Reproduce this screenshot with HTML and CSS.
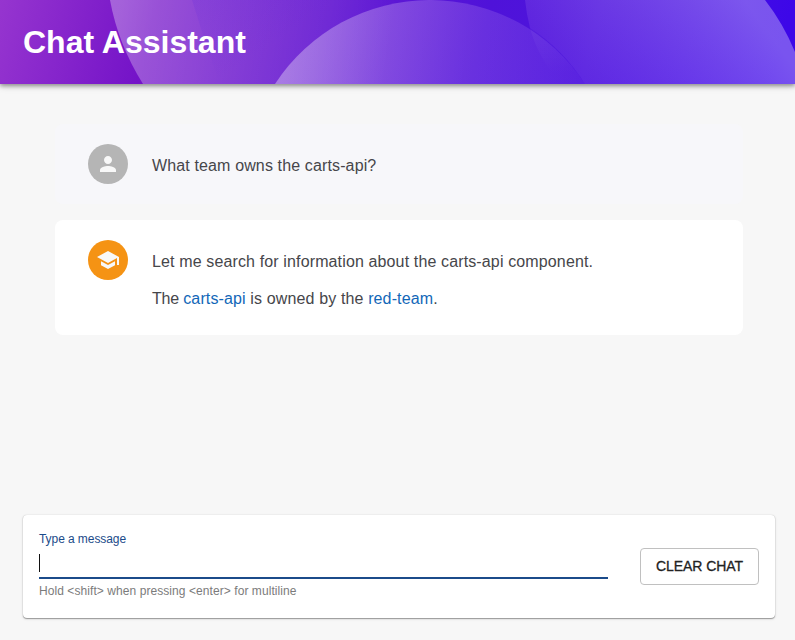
FILE: index.html
```html
<!DOCTYPE html>
<html lang="en">
<head>
<meta charset="utf-8">
<title>Chat Assistant</title>
<link rel="stylesheet" href="styles.css">
</head>
<body>
<header class="header">
  <svg class="header-art" viewBox="0 0 795 84" preserveAspectRatio="none" aria-hidden="true">
    <defs>
      <linearGradient id="base" gradientUnits="userSpaceOnUse" x1="0" y1="0" x2="740" y2="200">
        <stop offset="0" stop-color="#9635cf"/>
        <stop offset=".2" stop-color="#7413c8"/>
        <stop offset=".42" stop-color="#651ad2"/>
        <stop offset=".62" stop-color="#4f12d9"/>
        <stop offset=".76" stop-color="#4d15de"/>
        <stop offset="1" stop-color="#3d07e8"/>
      </linearGradient>
      <linearGradient id="left" gradientUnits="userSpaceOnUse" x1="115" y1="30" x2="385" y2="75">
        <stop offset="0" stop-color="#fff" stop-opacity=".31"/>
        <stop offset=".4" stop-color="#fff" stop-opacity=".18"/>
        <stop offset="1" stop-color="#fff" stop-opacity="0"/>
      </linearGradient>
      <linearGradient id="middle" gradientUnits="userSpaceOnUse" x1="285" y1="65" x2="580" y2="100">
        <stop offset="0" stop-color="#fff" stop-opacity=".35"/>
        <stop offset=".6" stop-color="#f0d0ff" stop-opacity=".17"/>
        <stop offset="1" stop-color="#ddb0ff" stop-opacity=".09"/>
      </linearGradient>
      <linearGradient id="right" gradientUnits="userSpaceOnUse" x1="550" y1="84" x2="715" y2="-39">
        <stop offset="0" stop-color="#ddb0ff" stop-opacity=".09"/>
        <stop offset="1" stop-color="#fff" stop-opacity=".31"/>
      </linearGradient>
      <linearGradient id="sheen" gradientUnits="userSpaceOnUse" x1="193" y1="0" x2="238" y2="68">
        <stop offset="0" stop-color="#5420e0" stop-opacity=".15"/>
        <stop offset="1" stop-color="#5420e0" stop-opacity="0"/>
      </linearGradient>
      <linearGradient id="overlap" gradientUnits="userSpaceOnUse" x1="0" y1="26" x2="0" y2="74">
        <stop offset="0" stop-color="#fff" stop-opacity=".05"/>
        <stop offset="1" stop-color="#fff" stop-opacity="0"/>
      </linearGradient>
    </defs>
    <rect width="795" height="84" fill="url(#base)"/>
    <path d="M110 0Q118 44 143 84H430V0Z" fill="url(#left)"/>
    <path d="M192 0Q199 22 207 48L220 84H330V0Z" fill="url(#sheen)"/>
    <path d="M525 0Q526.500 14 530 28A185 185 0 0 1 585 84H795V52Q783 23 765 0Z" fill="url(#right)"/>
    <path d="M275 84A185 185 0 0 1 585 84Z" fill="url(#middle)"/>
    <path d="M530 28A185 185 0 0 1 585 84H561Q538 58 530 28Z" fill="url(#overlap)"/>
  </svg>
  <h1 class="title">Chat Assistant</h1>
</header>
<main class="chat">
  <section class="message message-user">
    <div class="avatar"><svg viewBox="0 0 24 24"><path d="M12 12c2.21 0 4-1.79 4-4s-1.79-4-4-4-4 1.79-4 4 1.79 4 4 4zm0 2c-2.67 0-8 1.34-8 4v2h16v-2c0-2.66-5.33-4-8-4z"/></svg></div>
    <div class="body"><p>What team owns the carts-api?</p></div>
  </section>
  <section class="message message-bot">
    <div class="avatar avatar-bot"><svg viewBox="0 0 24 24"><path d="M5 13.18v4L12 21l7-3.82v-4L12 17l-7-3.82zM12 3L1 9l11 6 9-4.91V17h2V9L12 3z"/></svg></div>
    <div class="body">
      <p>Let me search for information about the carts-api component.</p>
      <p><span class="lead">The </span><a href="#">carts-api</a> is owned by the <a href="#">red-team</a>.</p>
    </div>
  </section>
</main>
<footer class="composer">
  <div class="field">
    <div class="label">Type a message</div>
    <div class="input"><span class="caret"></span></div>
    <div class="hint">Hold &lt;shift&gt; when pressing &lt;enter&gt; for multiline</div>
  </div>
  <button class="clear" type="button">CLEAR CHAT</button>
</footer>
</body>
</html>
```
FILE: styles.css
```css
* { box-sizing: border-box; }
body {
  margin: 0;
  height: 640px;
  display: flex;
  flex-direction: column;
  overflow: hidden;
  background: #f7f7f7;
  color: #46464a;
  font-family: "Liberation Sans", Arial, sans-serif;
}
p { margin: 0; }
.header {
  position: relative;
  flex: none;
  height: 84px;
  padding: 24px 23px;
  box-shadow: 0 1px 8px rgba(0,0,0,.22), 0 2px 4px rgba(0,0,0,.32);
}
.header-art { position: absolute; inset: 0; width: 100%; height: 100%; }
.title {
  position: relative;
  width: max-content;
  margin: 0;
  color: #fff;
  font-size: 32px;
  line-height: 36px;
  font-weight: 700;
}
.chat { flex: 1; padding: 40px 52px 0 55px; }
.message {
  display: flex;
  gap: 24px;
  padding: 20px 33px;
  border-radius: 8px;
}
.message-user { height: 80px; background: #f7f7fa; }
.message-bot { height: 115px; margin-top: 16px; background: #fff; }
.avatar {
  display: flex;
  flex: none;
  align-items: center;
  justify-content: center;
  width: 40px;
  height: 40px;
  border-radius: 50%;
  background: #b5b5b5;
}
.avatar-bot { background: #f59314; }
.avatar svg { width: 24px; height: 24px; fill: #f8f8f8; }
.body {
  padding-top: 11px;
  font-size: 16px;
  line-height: 21px;
  letter-spacing: .133px;
  white-space: nowrap;
}
.body p + p { margin-top: 16px; }
.body a { color: #1267b8; text-decoration: none; }
.lead { letter-spacing: -.2px; }
.composer {
  flex: none;
  display: flex;
  height: 103px;
  margin: 0 20px 22px 23px;
  padding: 16px;
  border-radius: 4px;
  background: #fff;
  box-shadow: 0 0 1px rgba(0,0,0,.22), 0 1px 1px rgba(0,0,0,.3), 0 1px 3px rgba(0,0,0,.13);
}
.field { width: 569px; margin-right: 32px; font-size: 12px; white-space: nowrap; }
.label { height: 16px; line-height: 16px; letter-spacing: -.07px; color: #1b4b8a; }
.input { height: 32px; padding-top: 7px; border-bottom: 2px solid #1b4b8a; }
.caret { display: block; width: 1px; height: 18px; background: #111; }
.hint { margin-top: 4px; line-height: 16px; letter-spacing: .07px; color: #7b7b7b; }
.clear {
  width: 119px;
  height: 37px;
  margin: 17px 0 0;
  padding: 0 0 2px;
  border: 1px solid #c0c0c0;
  border-radius: 4px;
  background: #fff;
  color: #222;
  font: 14px/20px "Liberation Sans", Arial, sans-serif;
  letter-spacing: -.05px;
  white-space: nowrap;
  -webkit-text-stroke: .3px #222;
}
```
